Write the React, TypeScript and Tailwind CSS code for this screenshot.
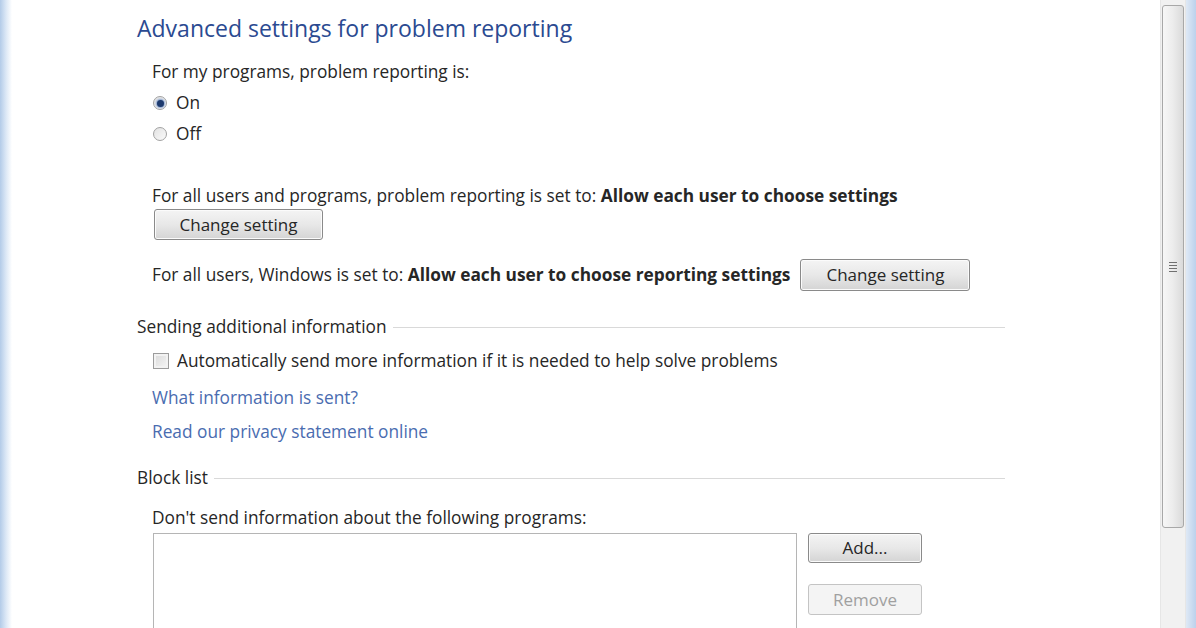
import React from "react";

const font = { fontFamily: '"Open Sans", "Noto Sans", Arial, sans-serif' };

function WinButton({ label, disabled, className }: { label: string; disabled?: boolean; className: string }) {
  return (
    <div
      className={
        "flex items-center justify-center rounded-[3px] border text-[17px] " +
        (disabled
          ? "border-[#c4c4c4] bg-[#f4f4f4] text-[#a0a0a0] "
          : "border-[#8a8a8a] bg-gradient-to-b from-[#f4f4f4] via-[#e8e8e8] to-[#d4d4d4] text-[#262626] shadow-[inset_0_0_0_1px_#fbfbfb] ") +
        className
      }
    >
      {label}
    </div>
  );
}

function SectionHeader({ label, className }: { label: string; className: string }) {
  return (
    <div className={"flex h-[24px] w-[868px] items-center " + className}>
      <span className="whitespace-nowrap text-[17.3px] text-[#262626]">{label}</span>
      <div className="ml-[6px] h-px flex-1 bg-[#d9d9d9]" />
    </div>
  );
}

function Radio({ checked }: { checked?: boolean }) {
  return (
    <div className="flex h-[14px] w-[14px] items-center justify-center rounded-full border border-[#a2a2a2] bg-gradient-to-br from-[#e2e2e2] to-[#fafafa]">
      {checked && <div className="h-[7px] w-[7px] rounded-full bg-[#1d3a6e] shadow-[0_0_2px_1px_#7b98c8]" />}
    </div>
  );
}

export default function App() {
  return (
    <div className="flex h-[628px] w-[1196px] overflow-hidden bg-white" style={font}>
      {/* window frame edge */}
      <div className="w-[12px] shrink-0 bg-gradient-to-r from-[#b3cbe8] via-[#dce8f6] to-white" />

      <div className="flex-1 pl-[125px] pt-[8px] text-[#262626]">
        <div className="flex h-[40px] items-center whitespace-nowrap text-[23px] text-[#2b4a91]">
          Advanced settings for problem reporting
        </div>

        <div className="ml-[15px]">
          <div className="mt-[12px] flex h-[24px] items-center text-[17.3px]">For my programs, problem reporting is:</div>
          <div className="mt-[7px] flex h-[24px] items-center gap-[9px] pl-[1px] text-[17.3px]">
            <Radio checked />
            <span>On</span>
          </div>
          <div className="mt-[7px] flex h-[24px] items-center gap-[9px] pl-[1px] text-[17.3px]">
            <Radio />
            <span>Off</span>
          </div>

          <div className="mt-[38px] flex h-[24px] items-center whitespace-nowrap text-[17.3px]">
            For all users and programs, problem reporting is set to:&nbsp;<b>Allow each user to choose settings</b>
          </div>
          <WinButton label="Change setting" className="ml-[2px] mt-px h-[31px] w-[169px]" />

          <div className="mt-[19px] flex h-[32px] items-center whitespace-nowrap text-[17.3px]">
            For all users, Windows is set to:&nbsp;<b>Allow each user to choose reporting settings</b>
            <WinButton label="Change setting" className="ml-[10px] h-[32px] w-[170px]" />
          </div>
        </div>

        <SectionHeader label="Sending additional information" className="mt-[24px]" />

        <div className="ml-[15px]">
          <div className="mt-[10px] flex h-[24px] items-center gap-[8px] pl-[1px] text-[17.3px]">
            <div className="h-[16px] w-[16px] border border-[#9c9c9c] bg-gradient-to-br from-[#d9d9d9] to-[#f6f6f6] shadow-[inset_0_0_0_2px_#f2f2f2]" />
            <span>Automatically send more information if it is needed to help solve problems</span>
          </div>
          <div className="mt-[13px] flex h-[24px] items-center text-[17.3px] text-[#4a6cb0]">What information is sent?</div>
          <div className="mt-[10px] flex h-[24px] items-center text-[17.3px] text-[#4a6cb0]">Read our privacy statement online</div>
        </div>

        <SectionHeader label="Block list" className="mt-[22px]" />

        <div className="ml-[15px]">
          <div className="mt-[16px] flex h-[24px] items-center text-[17.3px]">Don&apos;t send information about the following programs:</div>
          <div className="mt-[3px] flex">
            <div className="ml-[1px] h-[140px] w-[644px] border border-[#b5b5b5] bg-white" />
            <div className="ml-[11px] flex flex-col">
              <WinButton label="Add..." className="h-[30px] w-[114px]" />
              <WinButton label="Remove" disabled className="mt-[21px] h-[31px] w-[114px]" />
            </div>
          </div>
        </div>
      </div>

      {/* scrollbar */}
      <div className="flex w-[26px] shrink-0 flex-col border-x border-[#e6e6e6] bg-[#f1f1f1]">
        <div className="mx-px mt-[5px] flex h-[523px] items-center justify-center rounded-[3px] border border-[#a8a8a8] bg-gradient-to-r from-[#f7f7f7] via-[#ececec] to-[#dadada]">
          <div className="flex flex-col gap-[2px]">
            <div className="h-px w-[8px] bg-[#707070]" />
            <div className="h-px w-[8px] bg-[#707070]" />
            <div className="h-px w-[8px] bg-[#707070]" />
            <div className="h-px w-[8px] bg-[#707070]" />
          </div>
        </div>
      </div>
      <div className="w-[10px] shrink-0 bg-gradient-to-r from-[#dfe9f5] to-[#bcd1ec]" />
    </div>
  );
}
